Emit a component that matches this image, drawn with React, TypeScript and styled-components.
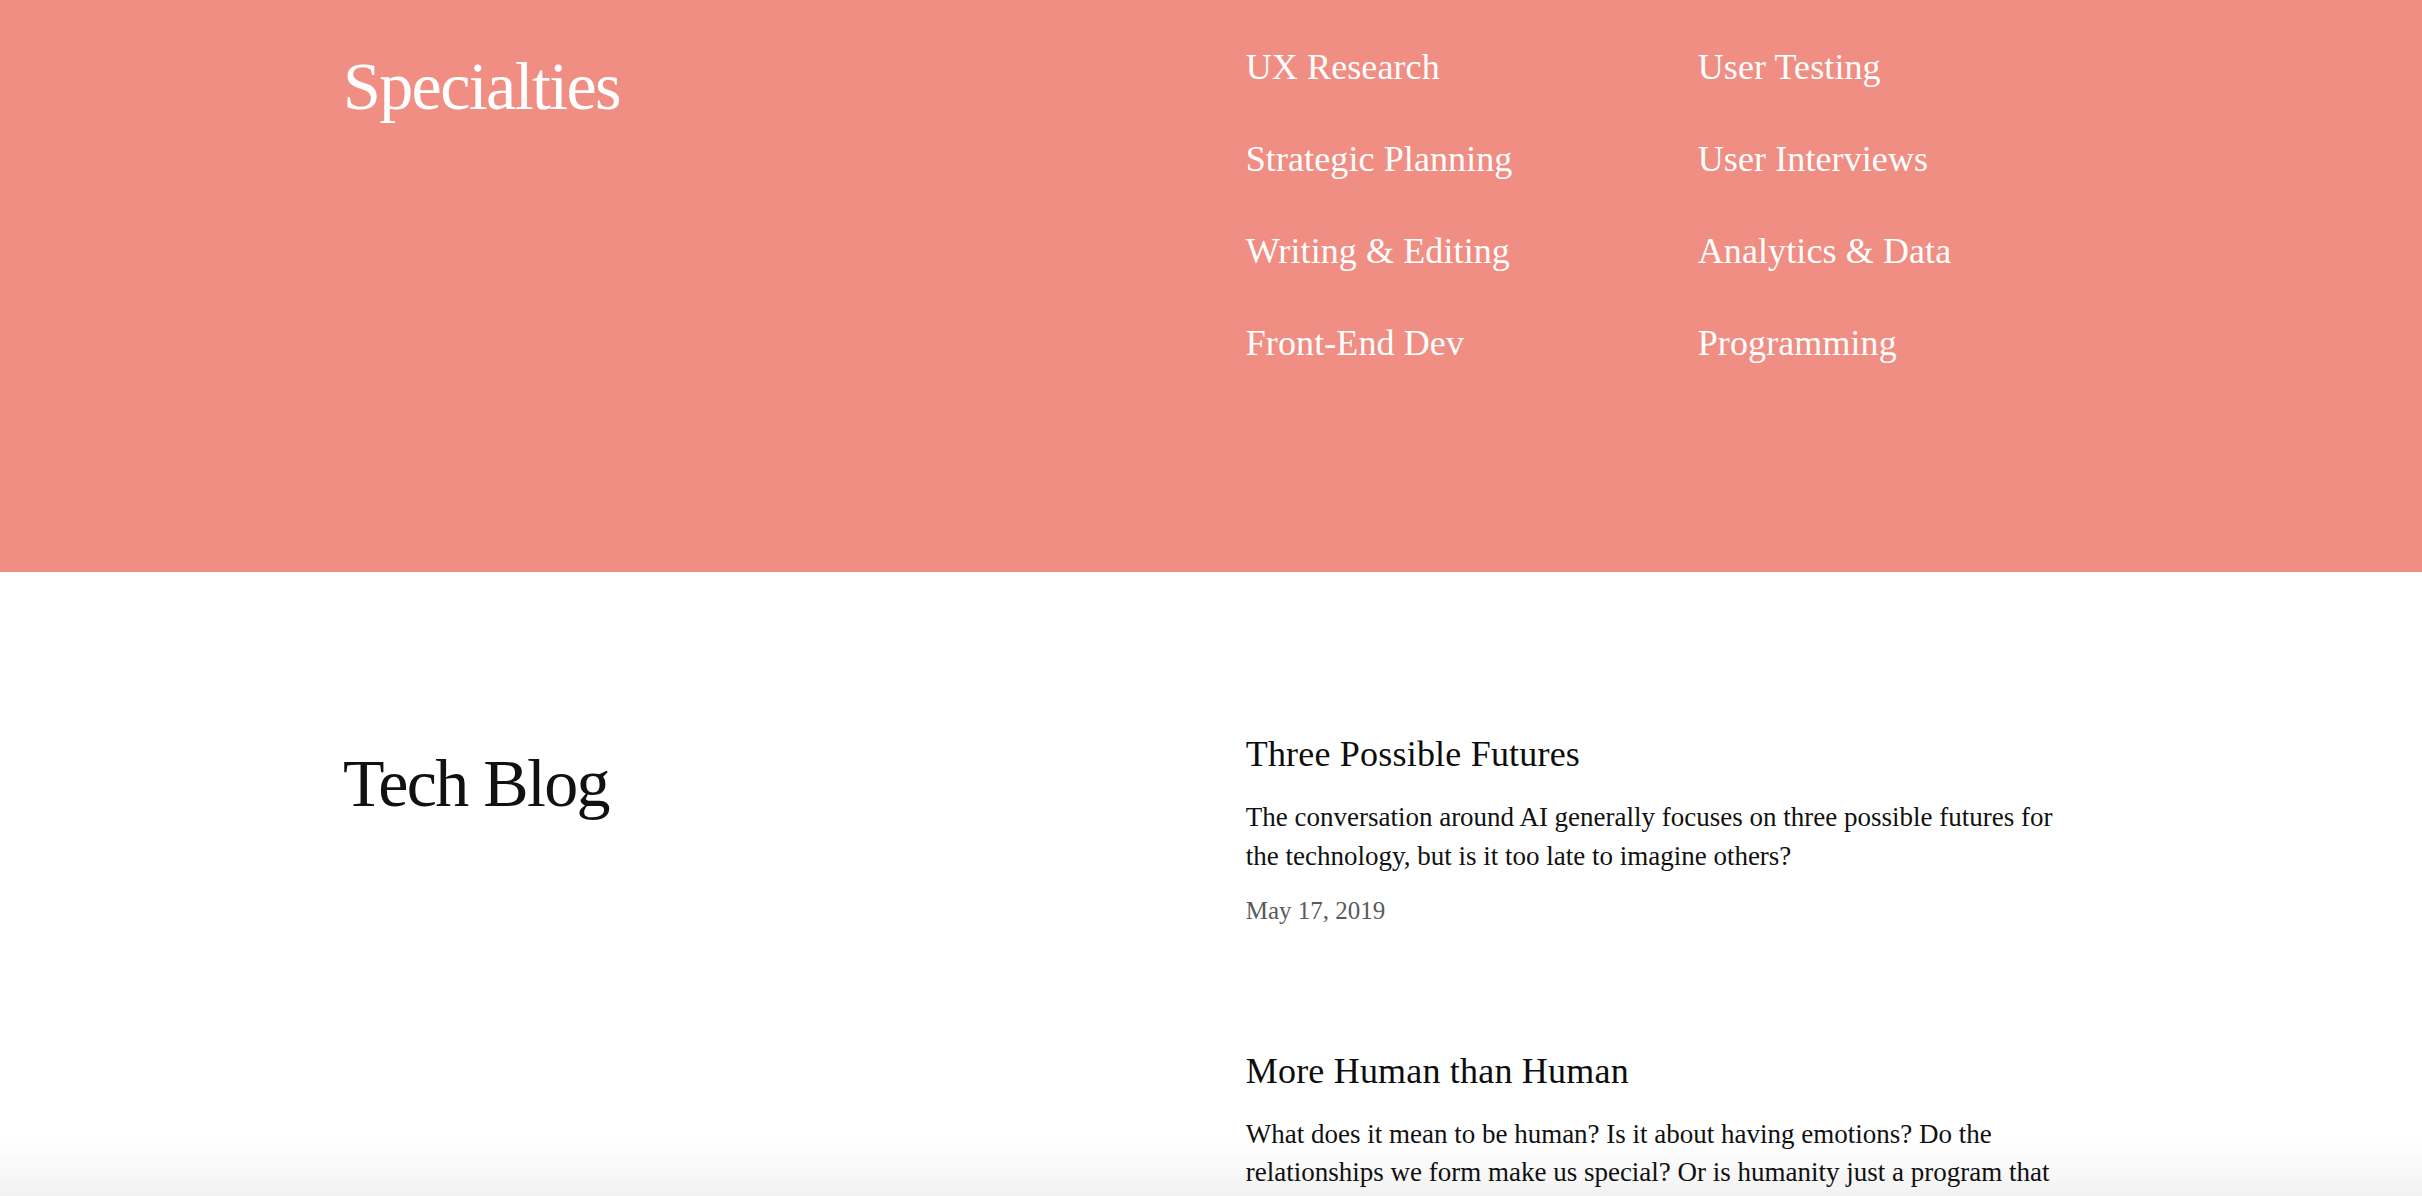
import React from "react";
import styled, { createGlobalStyle } from "styled-components";

const GlobalStyle = createGlobalStyle`
  html, body {
    margin: 0;
    padding: 0;
    background: #ffffff;
  }
  body {
    font-family: "Liberation Serif", "Times New Roman", serif;
    -webkit-font-smoothing: antialiased;
  }
  * { box-sizing: border-box; }
`;

const Section = styled.section<{ $tone: "coral" | "light" }>`
  background: ${(p) => (p.$tone === "coral" ? "#f08e83" : "#ffffff")};
  color: ${(p) => (p.$tone === "coral" ? "#ffffff" : "#111111")};
  padding: ${(p) => (p.$tone === "coral" ? "40px 0 202px" : "155px 0 120px")};
`;

const Container = styled.div`
  width: 1736px;
  margin: 0 auto;
  display: grid;
  grid-template-columns: 52% 48%;
  align-items: start;
`;

const Heading = styled.h2<{ $offset?: number }>`
  margin: ${(p) => p.$offset ?? 0}px 0 0;
  font-family: "Liberation Serif", "Times New Roman", serif;
  font-weight: 400;
  font-size: 68px;
  line-height: 92px;
  letter-spacing: -1.6px;
  color: inherit;
`;

const SkillGrid = styled.ul`
  list-style: none;
  margin: 0;
  padding: 0;
  display: grid;
  grid-template-columns: 452px 1fr;
  row-gap: 38px;
`;

const Skill = styled.li`
  font-size: 36px;
  line-height: 54px;
  letter-spacing: 0.1px;
  color: #ffffff;
  white-space: nowrap;
`;

const PostList = styled.div`
  display: flex;
  flex-direction: column;
  gap: 115px;
`;

const Post = styled.article`
  display: flex;
  flex-direction: column;
`;

const PostTitle = styled.h3`
  margin: 0;
  font-weight: 400;
  font-size: 36px;
  line-height: 54px;
  letter-spacing: 0.2px;
  color: #0d0d0d;
`;

const PostExcerpt = styled.p`
  margin: 17px 0 0;
  font-size: 27px;
  line-height: 38.5px;
  color: #111111;
`;

const PostDate = styled.time`
  display: block;
  margin-top: 17.5px;
  font-size: 25px;
  line-height: 36px;
  color: #5a5a5a;
`;

const BottomFade = styled.div`
  position: fixed;
  left: 0;
  right: 0;
  bottom: 0;
  height: 56px;
  pointer-events: none;
  background: linear-gradient(to bottom, rgba(0, 0, 0, 0), rgba(0, 0, 0, 0.05));
`;

const skills = [
  "UX Research",
  "User Testing",
  "Strategic Planning",
  "User Interviews",
  "Writing & Editing",
  "Analytics & Data",
  "Front-End Dev",
  "Programming",
];

const posts = [
  {
    title: "Three Possible Futures",
    excerpt:
      "The conversation around AI generally focuses on three possible futures for the technology, but is it too late to imagine others?",
    date: "May 17, 2019",
  },
  {
    title: "More Human than Human",
    excerpt:
      "What does it mean to be human? Is it about having emotions? Do the relationships we form make us special? Or is humanity just a program that can be replicated?",
    date: "April 2, 2019",
  },
];

export default function App() {
  return (
    <>
      <GlobalStyle />
      <Section $tone="coral">
        <Container>
          <Heading>Specialties</Heading>
          <SkillGrid>
            {skills.map((s) => (
              <Skill key={s}>{s}</Skill>
            ))}
          </SkillGrid>
        </Container>
      </Section>
      <Section $tone="light">
        <Container>
          <Heading $offset={10}>Tech Blog</Heading>
          <PostList>
            {posts.map((p) => (
              <Post key={p.title}>
                <PostTitle>{p.title}</PostTitle>
                <PostExcerpt>{p.excerpt}</PostExcerpt>
                <PostDate>{p.date}</PostDate>
              </Post>
            ))}
          </PostList>
        </Container>
      </Section>
      <BottomFade />
    </>
  );
}
